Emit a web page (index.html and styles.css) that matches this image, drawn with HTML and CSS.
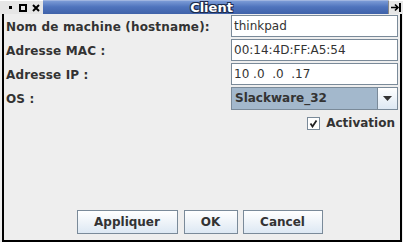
FILE: index.html
```html
<!DOCTYPE html>
<html lang="fr">
<head>
  <meta charset="UTF-8">
  <title>Client</title>
  <link rel="stylesheet" href="styles.css">
</head>
<body>
<div class="window">
  <div class="titlebar">
    <div class="tb-buttons">
      <span class="tb-min"></span>
      <span class="tb-max"></span>
      <svg class="tb-close" width="8" height="8" viewBox="0 0 8 8"><path d="M1 1L7 7M7 1L1 7" stroke="#000" stroke-width="2"/></svg>
    </div>
    <div class="tb-title">Client</div>
    <div class="tb-pin">
      <svg width="11" height="9" viewBox="0 0 11 9"><path d="M0 4.5H7M4 1.5L7 4.5L4 7.5" stroke="#000" stroke-width="1.6" fill="none"/><path d="M9 0V9" stroke="#000" stroke-width="2"/></svg>
    </div>
  </div>

  <div class="frame">
    <div class="form">
      <label class="lbl">Nom de machine (hostname):</label>
      <div class="field">thinkpad</div>

      <label class="lbl">Adresse MAC :</label>
      <div class="field">00:14:4D:FF:A5:54</div>

      <label class="lbl">Adresse IP :</label>
      <div class="field">10 .0  .0  .17</div>

      <label class="lbl">OS :</label>
      <div class="combo">
        <span class="combo-value">Slackware_32</span>
        <span class="combo-arrow"><svg width="9" height="5" viewBox="0 0 9 5"><path d="M0 0H9L4.5 5Z" fill="#333"/></svg></span>
      </div>
    </div>

    <div class="check-row">
      <span class="checkbox"><svg width="9" height="9" viewBox="0 0 9 9"><path d="M1.5 4.5L3.5 7.5L7.5 1.5" stroke="#222" stroke-width="1.8" fill="none"/></svg></span>
      <span class="check-label">Activation</span>
    </div>

    <div class="buttons">
      <button class="btn btn-apply">Appliquer</button>
      <button class="btn btn-ok">OK</button>
      <button class="btn btn-cancel">Cancel</button>
    </div>
  </div>
</div>
</body>
</html>
```

FILE: styles.css
```css
* {
  margin: 0;
  padding: 0;
  box-sizing: border-box;
}

body, html {
  width: 403px;
  height: 242px;
  overflow: hidden;
  background: #eeeeee;
}

.window {
  width: 403px;
  height: 242px;
  display: flex;
  flex-direction: column;
  font-family: "DejaVu Sans", sans-serif;
  color: #333333;
}

.titlebar {
  height: 14px;
  display: flex;
  flex: 0 0 auto;
  background: #e6e6e6;
}

.tb-buttons {
  flex: 0 0 43px;
  display: flex;
  align-items: center;
  padding-left: 9px;
  border-top: 1px solid #fff;
}

.tb-min {
  width: 3px;
  height: 3px;
  background: #000;
  margin-right: 7px;
}

.tb-max {
  width: 8px;
  height: 8px;
  border: 2px solid #000;
  margin-right: 5px;
}

.tb-close {
  display: block;
}

.tb-title {
  flex: 1;
  background: linear-gradient(#7a9ad6, #4f74bd 45%, #3f62a9);
  border-top: 1px solid #9fb5e0;
  color: #ffffff;
  font-weight: bold;
  font-size: 13px;
  line-height: 13px;
  text-align: center;
  text-shadow: 1px 1px 0 #1d2c4d, -1px -1px 0 #1d2c4d, 1px -1px 0 #1d2c4d, -1px 1px 0 #1d2c4d;
  padding-right: 8px;
}

.tb-pin {
  flex: 0 0 15px;
  display: flex;
  align-items: center;
  justify-content: center;
  border-top: 1px solid #fff;
  border-left: 1px solid #888;
}

.frame {
  flex: 1;
  display: flex;
  flex-direction: column;
  margin: 0 1px 0 2px;
  border-left: 2px solid #000;
  border-right: 2px solid #000;
  border-bottom: 2px solid #000;
  box-shadow: 0 3px 0 -1px #000;
  padding: 1px 2px 0 1px;
}

.form {
  display: grid;
  grid-template-columns: 226px 1fr;
  row-gap: 2px;
  align-items: center;
}

.lbl {
  font-weight: bold;
  font-size: 12px;
  letter-spacing: 0.15px;
  padding-left: 1px;
  padding-top: 1px;
}

.field {
  height: 22px;
  background: #ffffff;
  border: 1px solid #7a8a99;
  font-size: 12px;
  line-height: 20px;
  padding-left: 2px;
  color: #333333;
  white-space: pre;
}

.combo {
  height: 23px;
  display: flex;
  border: 1px solid #7a8a99;
  background: #a3b8cc;
}

.combo-value {
  flex: 1;
  font-weight: bold;
  font-size: 12px;
  line-height: 21px;
  padding-left: 3px;
}

.combo-arrow {
  width: 20px;
  display: flex;
  align-items: center;
  justify-content: center;
  border-left: 1px solid #7a8a99;
  background: linear-gradient(#ffffff, #dde8f3);
}

.check-row {
  display: flex;
  justify-content: flex-end;
  align-items: center;
  gap: 6px;
  margin-top: 6px;
  padding-right: 3px;
}

.checkbox {
  width: 13px;
  height: 13px;
  border: 1px solid #7a8a99;
  background: #ffffff;
  display: flex;
  align-items: center;
  justify-content: center;
}

.check-label {
  font-weight: bold;
  font-size: 12px;
}

.buttons {
  margin-top: auto;
  margin-bottom: 6px;
  display: flex;
  justify-content: center;
  padding-right: 4px;
}

.btn {
  height: 24px;
  border: 1px solid #7a8a99;
  background: linear-gradient(#ffffff, #dde8f3);
  font-family: "DejaVu Sans", sans-serif;
  font-weight: bold;
  font-size: 12px;
  color: #333333;
}

.btn-apply {
  width: 101px;
  margin-right: 6px;
}

.btn-ok {
  width: 54px;
  margin-right: 5px;
}

.btn-cancel {
  width: 80px;
}
```
